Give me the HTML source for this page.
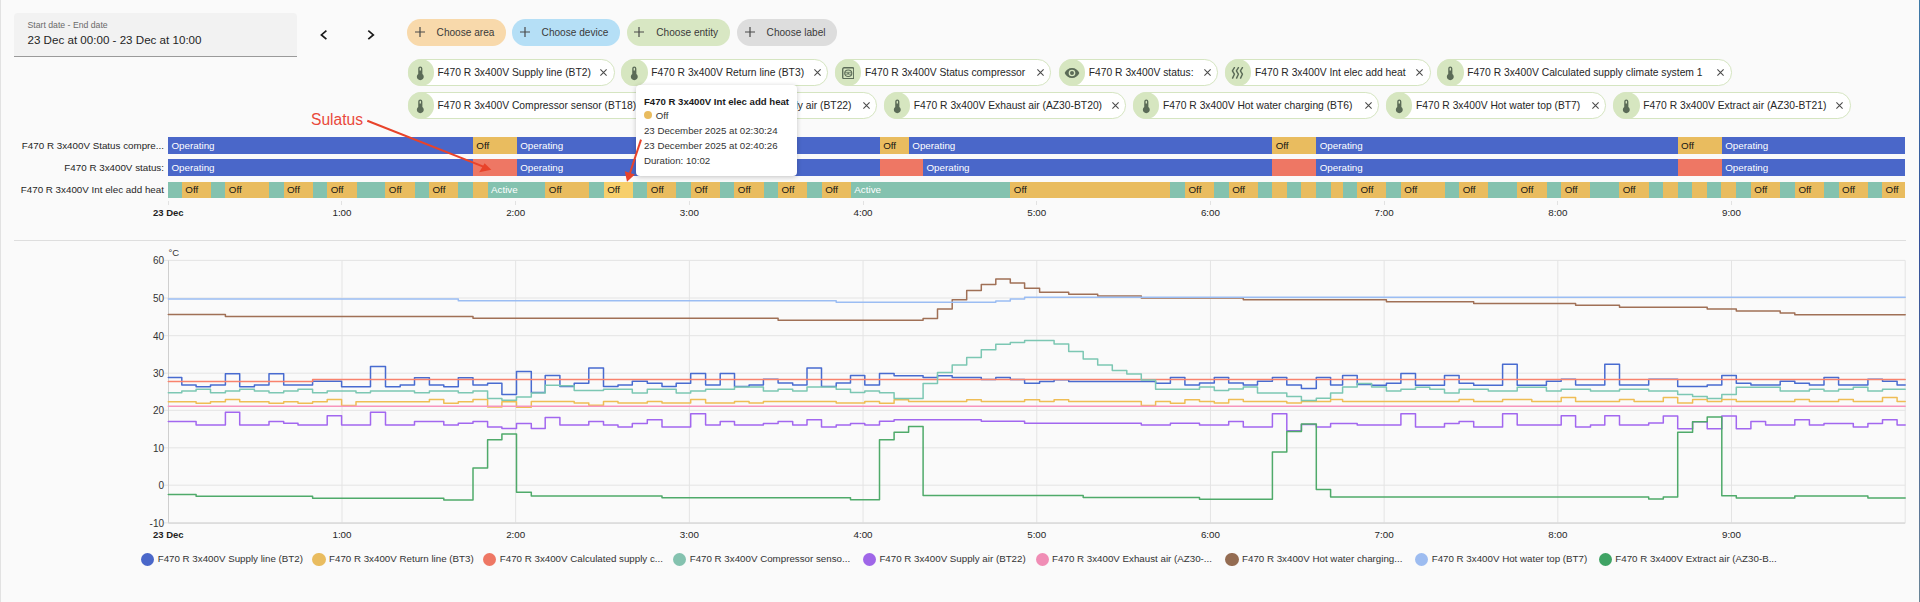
<!DOCTYPE html>
<html><head><meta charset="utf-8">
<style>
html,body{margin:0;padding:0}
body{width:1920px;height:602px;overflow:hidden;background:#fafafa;position:relative;font-family:"Liberation Sans",sans-serif;color:#212121}
.abs{position:absolute}
.lb{position:absolute;left:0;top:0;width:1px;height:602px;background:#e2e2e2}
.rb{position:absolute;left:1919px;top:0;width:1px;height:602px;background:linear-gradient(#3f7aa6,#34509a 40%,#6a8496)}
.date{position:absolute;left:14px;top:13px;width:283px;height:43.5px;background:#f2f2f2;border-radius:4px 4px 0 0;border-bottom:1px solid #9a9a9a;box-sizing:border-box}
.date .l{position:absolute;left:13.5px;top:6.8px;font-size:8.7px;color:#6a6a6a;white-space:nowrap}
.date .v{position:absolute;left:13.5px;top:19.5px;font-size:11.6px;color:#1f1f1f;white-space:nowrap}
.tchip{position:absolute;top:19.2px;height:26.5px;border-radius:13.25px}
.tchip .pl{position:absolute;left:7.6px;top:8.3px;width:10px;height:10px}
.tchip .pl svg{display:block}
.tchip .tt{position:absolute;left:29.6px;top:7.5px;font-size:10.1px;color:#3a3a3a;white-space:nowrap}
.chip{position:absolute;height:26.3px;box-sizing:border-box;border:1px solid #d5e5c1;border-radius:13.2px;background:#fff}
.chip .ic{position:absolute;left:-1px;top:-1px;width:26.3px;height:26.3px;border-radius:50%;background:#d6e6c0;display:flex;align-items:center;justify-content:center}
.chip .ic svg{display:block;position:relative;top:0.6px}
.chip .ct{position:absolute;left:29px;top:6.9px;font-size:10.3px;color:#262626;white-space:nowrap}
.chip .cx{position:absolute;right:6.4px;top:8.9px;width:7px;height:7px}
.chip .cx svg{display:block}
.rl{position:absolute;right:1756px;font-size:9.8px;color:#262626;white-space:nowrap;text-align:right}
.seg{position:absolute;overflow:hidden;white-space:nowrap;font-size:9.8px;box-sizing:border-box;padding-left:3.5px;line-height:16.6px}
.seg span{position:relative;top:0.6px}
.tick{position:absolute;width:1px;background:#e2e2e2}
.xl{position:absolute;width:80px;text-align:center;font-size:9.8px;color:#262626;white-space:nowrap}
.xl.b{font-weight:bold;color:#222;font-size:9.5px}
.sep{position:absolute;left:14px;top:239.5px;width:1892px;height:1.3px;background:#dedede}
.ch{position:absolute;left:0;top:0}
.yl{position:absolute;right:1756px;font-size:10px;color:#333;text-align:right;margin-top:1px}
.unit{position:absolute;left:168.5px;top:247px;font-size:9.5px;color:#333}
.ld{position:absolute;top:553px;width:13.2px;height:13.2px;border-radius:50%}
.lt{position:absolute;top:553.2px;font-size:9.75px;color:#333;white-space:nowrap}
.tip{position:absolute;left:635.7px;top:84.9px;width:161.3px;height:91.6px;background:#fff;border-radius:4px;box-shadow:0 1px 5px rgba(0,0,0,0.22)}
.tip div{position:absolute;left:8.3px;white-space:nowrap;font-size:9.7px;color:#333}
.sul{position:absolute;left:311px;top:111.3px;font-size:15.6px;color:#e9483b;white-space:nowrap}
</style></head><body>
<div class="lb"></div><div class="rb"></div>
<div class="date"><div class="l">Start date - End date</div><div class="v">23 Dec at 00:00 - 23 Dec at 10:00</div></div>
<svg class="abs" style="left:318px;top:28px" width="60" height="14" viewBox="0 0 60 14"><path d="M8.4 2.7L3.4 6.9 8.4 11.2" fill="none" stroke="#1a1a1a" stroke-width="1.7"/><path d="M50.3 2.7L55.3 6.9 50.3 11.2" fill="none" stroke="#1a1a1a" stroke-width="1.7"/></svg>
<div class="tchip" style="left:407px;width:99.00px;background:#f8d9ab"><div class="pl"><svg width="10" height="10" viewBox="0 0 10 10"><path d="M5 0v10M0 5h10" stroke="#4a4a4a" stroke-width="1.2"/></svg></div><div class="tt">Choose area</div></div>
<div class="tchip" style="left:512px;width:108.00px;background:#b5dff6"><div class="pl"><svg width="10" height="10" viewBox="0 0 10 10"><path d="M5 0v10M0 5h10" stroke="#4a4a4a" stroke-width="1.2"/></svg></div><div class="tt">Choose device</div></div>
<div class="tchip" style="left:626.7px;width:103.30px;background:#d8e7c3"><div class="pl"><svg width="10" height="10" viewBox="0 0 10 10"><path d="M5 0v10M0 5h10" stroke="#4a4a4a" stroke-width="1.2"/></svg></div><div class="tt">Choose entity</div></div>
<div class="tchip" style="left:737px;width:100.00px;background:#dddddd"><div class="pl"><svg width="10" height="10" viewBox="0 0 10 10"><path d="M5 0v10M0 5h10" stroke="#4a4a4a" stroke-width="1.2"/></svg></div><div class="tt">Choose label</div></div>
<div class="chip" style="left:407.50px;top:59.3px;width:207.00px"><div class="ic"><svg width="16.6" height="16.6" viewBox="0 0 24 24"><path d="M15 13V5A3 3 0 0 0 9 5V13A5 5 0 1 0 15 13M12 4A1 1 0 0 1 13 5V8H11V5A1 1 0 0 1 12 4Z" fill="#5b6b57"/></svg></div><div class="ct">F470 R 3x400V Supply line (BT2)</div><div class="cx"><svg width="7" height="7" viewBox="0 0 7 7"><path d="M0.4 0.4L6.6 6.6M6.6 0.4L0.4 6.6" stroke="#4a4a4a" stroke-width="1.05"/></svg></div></div>
<div class="chip" style="left:621.25px;top:59.3px;width:206.75px"><div class="ic"><svg width="16.6" height="16.6" viewBox="0 0 24 24"><path d="M15 13V5A3 3 0 0 0 9 5V13A5 5 0 1 0 15 13M12 4A1 1 0 0 1 13 5V8H11V5A1 1 0 0 1 12 4Z" fill="#5b6b57"/></svg></div><div class="ct">F470 R 3x400V Return line (BT3)</div><div class="cx"><svg width="7" height="7" viewBox="0 0 7 7"><path d="M0.4 0.4L6.6 6.6M6.6 0.4L0.4 6.6" stroke="#4a4a4a" stroke-width="1.05"/></svg></div></div>
<div class="chip" style="left:835.00px;top:59.3px;width:216.25px"><div class="ic"><svg width="12.5" height="12.5" viewBox="0 0 12 12"><rect x="0.7" y="0.7" width="10.6" height="10.6" rx="1.3" fill="none" stroke="#5b6b57" stroke-width="1.3"/><ellipse cx="6" cy="6" rx="3.4" ry="3.1" fill="none" stroke="#5b6b57" stroke-width="1.1"/><path d="M2.9 5.1h6.2M2.9 6.9h6.2" stroke="#5b6b57" stroke-width="0.7"/><ellipse cx="6" cy="6" rx="1" ry="0.7" fill="#5b6b57"/></svg></div><div class="ct">F470 R 3x400V Status compressor</div><div class="cx"><svg width="7" height="7" viewBox="0 0 7 7"><path d="M0.4 0.4L6.6 6.6M6.6 0.4L0.4 6.6" stroke="#4a4a4a" stroke-width="1.05"/></svg></div></div>
<div class="chip" style="left:1058.75px;top:59.3px;width:159.25px"><div class="ic"><svg width="16" height="16" viewBox="0 0 24 24"><path d="M12,9A3,3 0 0,0 9,12A3,3 0 0,0 12,15A3,3 0 0,0 15,12A3,3 0 0,0 12,9M12,17A5,5 0 0,1 7,12A5,5 0 0,1 12,7A5,5 0 0,1 17,12A5,5 0 0,1 12,17M12,4.5C7,4.5 2.73,7.61 1,12C2.73,16.39 7,19.5 12,19.5C17,19.5 21.27,16.39 23,12C21.27,7.61 17,4.5 12,4.5Z" fill="#5b6b57"/></svg></div><div class="ct">F470 R 3x400V status:</div><div class="cx"><svg width="7" height="7" viewBox="0 0 7 7"><path d="M0.4 0.4L6.6 6.6M6.6 0.4L0.4 6.6" stroke="#4a4a4a" stroke-width="1.05"/></svg></div></div>
<div class="chip" style="left:1225.00px;top:59.3px;width:205.70px"><div class="ic"><svg width="14" height="12" viewBox="0 0 14 12"><path d="M3.4 0.7L1.4 3.8 3.4 7.2 1.6 11.1M7.4 0.7L5.4 3.8 7.4 7.2 5.6 11.1M11.4 0.7L9.4 3.8 11.4 7.2 9.6 11.1" fill="none" stroke="#5b6b57" stroke-width="1.45" stroke-linecap="round" stroke-linejoin="round"/></svg></div><div class="ct">F470 R 3x400V Int elec add heat</div><div class="cx"><svg width="7" height="7" viewBox="0 0 7 7"><path d="M0.4 0.4L6.6 6.6M6.6 0.4L0.4 6.6" stroke="#4a4a4a" stroke-width="1.05"/></svg></div></div>
<div class="chip" style="left:1437.30px;top:59.3px;width:294.40px"><div class="ic"><svg width="16.6" height="16.6" viewBox="0 0 24 24"><path d="M15 13V5A3 3 0 0 0 9 5V13A5 5 0 1 0 15 13M12 4A1 1 0 0 1 13 5V8H11V5A1 1 0 0 1 12 4Z" fill="#5b6b57"/></svg></div><div class="ct">F470 R 3x400V Calculated supply climate system 1</div><div class="cx"><svg width="7" height="7" viewBox="0 0 7 7"><path d="M0.4 0.4L6.6 6.6M6.6 0.4L0.4 6.6" stroke="#4a4a4a" stroke-width="1.05"/></svg></div></div>
<div class="chip" style="left:407.50px;top:92.4px;width:252.50px"><div class="ic"><svg width="16.6" height="16.6" viewBox="0 0 24 24"><path d="M15 13V5A3 3 0 0 0 9 5V13A5 5 0 1 0 15 13M12 4A1 1 0 0 1 13 5V8H11V5A1 1 0 0 1 12 4Z" fill="#5b6b57"/></svg></div><div class="ct">F470 R 3x400V Compressor sensor (BT18)</div><div class="cx"><svg width="7" height="7" viewBox="0 0 7 7"><path d="M0.4 0.4L6.6 6.6M6.6 0.4L0.4 6.6" stroke="#4a4a4a" stroke-width="1.05"/></svg></div></div>
<div class="chip" style="left:667.00px;top:92.4px;width:210.00px"><div class="ic"><svg width="16.6" height="16.6" viewBox="0 0 24 24"><path d="M15 13V5A3 3 0 0 0 9 5V13A5 5 0 1 0 15 13M12 4A1 1 0 0 1 13 5V8H11V5A1 1 0 0 1 12 4Z" fill="#5b6b57"/></svg></div><div class="ct">F470 R 3x400V Supply air (BT22)</div><div class="cx"><svg width="7" height="7" viewBox="0 0 7 7"><path d="M0.4 0.4L6.6 6.6M6.6 0.4L0.4 6.6" stroke="#4a4a4a" stroke-width="1.05"/></svg></div></div>
<div class="chip" style="left:883.75px;top:92.4px;width:242.50px"><div class="ic"><svg width="16.6" height="16.6" viewBox="0 0 24 24"><path d="M15 13V5A3 3 0 0 0 9 5V13A5 5 0 1 0 15 13M12 4A1 1 0 0 1 13 5V8H11V5A1 1 0 0 1 12 4Z" fill="#5b6b57"/></svg></div><div class="ct">F470 R 3x400V Exhaust air (AZ30-BT20)</div><div class="cx"><svg width="7" height="7" viewBox="0 0 7 7"><path d="M0.4 0.4L6.6 6.6M6.6 0.4L0.4 6.6" stroke="#4a4a4a" stroke-width="1.05"/></svg></div></div>
<div class="chip" style="left:1133.00px;top:92.4px;width:246.30px"><div class="ic"><svg width="16.6" height="16.6" viewBox="0 0 24 24"><path d="M15 13V5A3 3 0 0 0 9 5V13A5 5 0 1 0 15 13M12 4A1 1 0 0 1 13 5V8H11V5A1 1 0 0 1 12 4Z" fill="#5b6b57"/></svg></div><div class="ct">F470 R 3x400V Hot water charging (BT6)</div><div class="cx"><svg width="7" height="7" viewBox="0 0 7 7"><path d="M0.4 0.4L6.6 6.6M6.6 0.4L0.4 6.6" stroke="#4a4a4a" stroke-width="1.05"/></svg></div></div>
<div class="chip" style="left:1386.00px;top:92.4px;width:220.00px"><div class="ic"><svg width="16.6" height="16.6" viewBox="0 0 24 24"><path d="M15 13V5A3 3 0 0 0 9 5V13A5 5 0 1 0 15 13M12 4A1 1 0 0 1 13 5V8H11V5A1 1 0 0 1 12 4Z" fill="#5b6b57"/></svg></div><div class="ct">F470 R 3x400V Hot water top (BT7)</div><div class="cx"><svg width="7" height="7" viewBox="0 0 7 7"><path d="M0.4 0.4L6.6 6.6M6.6 0.4L0.4 6.6" stroke="#4a4a4a" stroke-width="1.05"/></svg></div></div>
<div class="chip" style="left:1613.30px;top:92.4px;width:237.40px"><div class="ic"><svg width="16.6" height="16.6" viewBox="0 0 24 24"><path d="M15 13V5A3 3 0 0 0 9 5V13A5 5 0 1 0 15 13M12 4A1 1 0 0 1 13 5V8H11V5A1 1 0 0 1 12 4Z" fill="#5b6b57"/></svg></div><div class="ct">F470 R 3x400V Extract air (AZ30-BT21)</div><div class="cx"><svg width="7" height="7" viewBox="0 0 7 7"><path d="M0.4 0.4L6.6 6.6M6.6 0.4L0.4 6.6" stroke="#4a4a4a" stroke-width="1.05"/></svg></div></div>
<div class="rl" style="top:139.5px">F470 R 3x400V Status compre...</div>
<div class="rl" style="top:162px">F470 R 3x400V status:</div>
<div class="rl" style="top:184.2px">F470 R 3x400V Int elec add heat</div>
<div class="seg" style="left:168.00px;top:137.1px;width:305.50px;height:16.6px;background:#4a67c9"><span style="color:#fff">Operating</span></div>
<div class="seg" style="left:472.80px;top:137.1px;width:44.60px;height:16.6px;background:#e9bc5f"><span style="color:#141414">Off</span></div>
<div class="seg" style="left:516.70px;top:137.1px;width:363.70px;height:16.6px;background:#4a67c9"><span style="color:#fff">Operating</span></div>
<div class="seg" style="left:879.70px;top:137.1px;width:29.80px;height:16.6px;background:#e9bc5f"><span style="color:#141414">Off</span></div>
<div class="seg" style="left:908.80px;top:137.1px;width:364.10px;height:16.6px;background:#4a67c9"><span style="color:#fff">Operating</span></div>
<div class="seg" style="left:1272.20px;top:137.1px;width:44.70px;height:16.6px;background:#e9bc5f"><span style="color:#141414">Off</span></div>
<div class="seg" style="left:1316.20px;top:137.1px;width:362.10px;height:16.6px;background:#4a67c9"><span style="color:#fff">Operating</span></div>
<div class="seg" style="left:1677.60px;top:137.1px;width:44.80px;height:16.6px;background:#e9bc5f"><span style="color:#141414">Off</span></div>
<div class="seg" style="left:1721.70px;top:137.1px;width:183.50px;height:16.6px;background:#4a67c9"><span style="color:#fff">Operating</span></div>
<div class="seg" style="left:168.00px;top:159.2px;width:305.50px;height:16.6px;background:#4a67c9"><span style="color:#fff">Operating</span></div>
<div class="seg" style="left:472.80px;top:159.2px;width:44.60px;height:16.6px;background:#ee7764"></div>
<div class="seg" style="left:516.70px;top:159.2px;width:363.70px;height:16.6px;background:#4a67c9"><span style="color:#fff">Operating</span></div>
<div class="seg" style="left:879.70px;top:159.2px;width:44.00px;height:16.6px;background:#ee7764"></div>
<div class="seg" style="left:923.00px;top:159.2px;width:349.90px;height:16.6px;background:#4a67c9"><span style="color:#fff">Operating</span></div>
<div class="seg" style="left:1272.20px;top:159.2px;width:44.70px;height:16.6px;background:#ee7764"></div>
<div class="seg" style="left:1316.20px;top:159.2px;width:362.10px;height:16.6px;background:#4a67c9"><span style="color:#fff">Operating</span></div>
<div class="seg" style="left:1677.60px;top:159.2px;width:44.80px;height:16.6px;background:#ee7764"></div>
<div class="seg" style="left:1721.70px;top:159.2px;width:183.50px;height:16.6px;background:#4a67c9"><span style="color:#fff">Operating</span></div>
<div class="seg" style="left:168.00px;top:181.7px;width:14.50px;height:16.2px;background:#84c2af"></div>
<div class="seg" style="left:181.80px;top:181.7px;width:29.70px;height:16.2px;background:#e9bc5f"><span style="color:#141414">Off</span></div>
<div class="seg" style="left:210.80px;top:181.7px;width:15.20px;height:16.2px;background:#84c2af"></div>
<div class="seg" style="left:225.30px;top:181.7px;width:44.60px;height:16.2px;background:#e9bc5f"><span style="color:#141414">Off</span></div>
<div class="seg" style="left:269.20px;top:181.7px;width:15.00px;height:16.2px;background:#84c2af"></div>
<div class="seg" style="left:283.50px;top:181.7px;width:30.00px;height:16.2px;background:#e9bc5f"><span style="color:#141414">Off</span></div>
<div class="seg" style="left:312.80px;top:181.7px;width:15.10px;height:16.2px;background:#84c2af"></div>
<div class="seg" style="left:327.20px;top:181.7px;width:30.20px;height:16.2px;background:#e9bc5f"><span style="color:#141414">Off</span></div>
<div class="seg" style="left:356.70px;top:181.7px;width:29.30px;height:16.2px;background:#84c2af"></div>
<div class="seg" style="left:385.30px;top:181.7px;width:30.10px;height:16.2px;background:#e9bc5f"><span style="color:#141414">Off</span></div>
<div class="seg" style="left:414.70px;top:181.7px;width:15.00px;height:16.2px;background:#84c2af"></div>
<div class="seg" style="left:429.00px;top:181.7px;width:30.00px;height:16.2px;background:#e9bc5f"><span style="color:#141414">Off</span></div>
<div class="seg" style="left:458.30px;top:181.7px;width:15.20px;height:16.2px;background:#84c2af"></div>
<div class="seg" style="left:472.80px;top:181.7px;width:15.40px;height:16.2px;background:#e9bc5f"></div>
<div class="seg" style="left:487.50px;top:181.7px;width:58.50px;height:16.2px;background:#84c2af"><span style="color:#fff">Active</span></div>
<div class="seg" style="left:545.30px;top:181.7px;width:44.60px;height:16.2px;background:#e9bc5f"><span style="color:#141414">Off</span></div>
<div class="seg" style="left:589.20px;top:181.7px;width:15.20px;height:16.2px;background:#84c2af"></div>
<div class="seg" style="left:603.70px;top:181.7px;width:30.00px;height:16.2px;background:#f7cf6c"><span style="color:#141414">Off</span></div>
<div class="seg" style="left:633.00px;top:181.7px;width:15.00px;height:16.2px;background:#84c2af"></div>
<div class="seg" style="left:647.30px;top:181.7px;width:29.70px;height:16.2px;background:#e9bc5f"><span style="color:#141414">Off</span></div>
<div class="seg" style="left:676.30px;top:181.7px;width:15.40px;height:16.2px;background:#84c2af"></div>
<div class="seg" style="left:691.00px;top:181.7px;width:29.70px;height:16.2px;background:#e9bc5f"><span style="color:#141414">Off</span></div>
<div class="seg" style="left:720.00px;top:181.7px;width:15.00px;height:16.2px;background:#84c2af"></div>
<div class="seg" style="left:734.30px;top:181.7px;width:30.10px;height:16.2px;background:#e9bc5f"><span style="color:#141414">Off</span></div>
<div class="seg" style="left:763.70px;top:181.7px;width:15.00px;height:16.2px;background:#84c2af"></div>
<div class="seg" style="left:778.00px;top:181.7px;width:29.90px;height:16.2px;background:#e9bc5f"><span style="color:#141414">Off</span></div>
<div class="seg" style="left:807.20px;top:181.7px;width:15.20px;height:16.2px;background:#84c2af"></div>
<div class="seg" style="left:821.70px;top:181.7px;width:29.80px;height:16.2px;background:#e9bc5f"><span style="color:#141414">Off</span></div>
<div class="seg" style="left:850.80px;top:181.7px;width:160.20px;height:16.2px;background:#84c2af"><span style="color:#fff">Active</span></div>
<div class="seg" style="left:1010.30px;top:181.7px;width:160.70px;height:16.2px;background:#e9bc5f"><span style="color:#141414">Off</span></div>
<div class="seg" style="left:1170.30px;top:181.7px;width:15.40px;height:16.2px;background:#84c2af"></div>
<div class="seg" style="left:1185.00px;top:181.7px;width:29.90px;height:16.2px;background:#e9bc5f"><span style="color:#141414">Off</span></div>
<div class="seg" style="left:1214.20px;top:181.7px;width:15.20px;height:16.2px;background:#84c2af"></div>
<div class="seg" style="left:1228.70px;top:181.7px;width:30.00px;height:16.2px;background:#e9bc5f"><span style="color:#141414">Off</span></div>
<div class="seg" style="left:1258.00px;top:181.7px;width:14.90px;height:16.2px;background:#84c2af"></div>
<div class="seg" style="left:1272.20px;top:181.7px;width:15.50px;height:16.2px;background:#e9bc5f"></div>
<div class="seg" style="left:1287.00px;top:181.7px;width:15.00px;height:16.2px;background:#84c2af"></div>
<div class="seg" style="left:1301.30px;top:181.7px;width:15.60px;height:16.2px;background:#e9bc5f"></div>
<div class="seg" style="left:1316.20px;top:181.7px;width:15.20px;height:16.2px;background:#84c2af"></div>
<div class="seg" style="left:1330.70px;top:181.7px;width:12.80px;height:16.2px;background:#e9bc5f"></div>
<div class="seg" style="left:1342.80px;top:181.7px;width:14.90px;height:16.2px;background:#84c2af"></div>
<div class="seg" style="left:1357.00px;top:181.7px;width:30.00px;height:16.2px;background:#e9bc5f"><span style="color:#141414">Off</span></div>
<div class="seg" style="left:1386.30px;top:181.7px;width:15.20px;height:16.2px;background:#84c2af"></div>
<div class="seg" style="left:1400.80px;top:181.7px;width:44.60px;height:16.2px;background:#e9bc5f"><span style="color:#141414">Off</span></div>
<div class="seg" style="left:1444.70px;top:181.7px;width:15.20px;height:16.2px;background:#84c2af"></div>
<div class="seg" style="left:1459.20px;top:181.7px;width:29.50px;height:16.2px;background:#e9bc5f"><span style="color:#141414">Off</span></div>
<div class="seg" style="left:1488.00px;top:181.7px;width:29.70px;height:16.2px;background:#84c2af"></div>
<div class="seg" style="left:1517.00px;top:181.7px;width:30.40px;height:16.2px;background:#e9bc5f"><span style="color:#141414">Off</span></div>
<div class="seg" style="left:1546.70px;top:181.7px;width:15.20px;height:16.2px;background:#84c2af"></div>
<div class="seg" style="left:1561.20px;top:181.7px;width:29.80px;height:16.2px;background:#e9bc5f"><span style="color:#141414">Off</span></div>
<div class="seg" style="left:1590.30px;top:181.7px;width:29.60px;height:16.2px;background:#84c2af"></div>
<div class="seg" style="left:1619.20px;top:181.7px;width:30.20px;height:16.2px;background:#e9bc5f"><span style="color:#141414">Off</span></div>
<div class="seg" style="left:1648.70px;top:181.7px;width:15.00px;height:16.2px;background:#84c2af"></div>
<div class="seg" style="left:1663.00px;top:181.7px;width:15.60px;height:16.2px;background:#e9bc5f"></div>
<div class="seg" style="left:1677.90px;top:181.7px;width:15.00px;height:16.2px;background:#84c2af"></div>
<div class="seg" style="left:1692.20px;top:181.7px;width:15.60px;height:16.2px;background:#e9bc5f"></div>
<div class="seg" style="left:1707.10px;top:181.7px;width:15.00px;height:16.2px;background:#84c2af"></div>
<div class="seg" style="left:1721.40px;top:181.7px;width:15.60px;height:16.2px;background:#e9bc5f"></div>
<div class="seg" style="left:1736.30px;top:181.7px;width:15.20px;height:16.2px;background:#84c2af"></div>
<div class="seg" style="left:1750.80px;top:181.7px;width:30.20px;height:16.2px;background:#e9bc5f"><span style="color:#141414">Off</span></div>
<div class="seg" style="left:1780.30px;top:181.7px;width:15.30px;height:16.2px;background:#84c2af"></div>
<div class="seg" style="left:1794.90px;top:181.7px;width:29.80px;height:16.2px;background:#e9bc5f"><span style="color:#141414">Off</span></div>
<div class="seg" style="left:1824.00px;top:181.7px;width:15.30px;height:16.2px;background:#84c2af"></div>
<div class="seg" style="left:1838.60px;top:181.7px;width:29.90px;height:16.2px;background:#e9bc5f"><span style="color:#141414">Off</span></div>
<div class="seg" style="left:1867.80px;top:181.7px;width:15.00px;height:16.2px;background:#84c2af"></div>
<div class="seg" style="left:1882.10px;top:181.7px;width:23.10px;height:16.2px;background:#e9bc5f"><span style="color:#141414">Off</span></div>
<div class="tick" style="left:167.80px;top:201px;height:3.5px"></div>
<div class="xl b" style="left:128.30px;top:207px">23 Dec</div>
<div class="tick" style="left:341.49px;top:201px;height:3.5px"></div>
<div class="xl" style="left:301.99px;top:207px">1:00</div>
<div class="tick" style="left:515.18px;top:201px;height:3.5px"></div>
<div class="xl" style="left:475.68px;top:207px">2:00</div>
<div class="tick" style="left:688.87px;top:201px;height:3.5px"></div>
<div class="xl" style="left:649.37px;top:207px">3:00</div>
<div class="tick" style="left:862.56px;top:201px;height:3.5px"></div>
<div class="xl" style="left:823.06px;top:207px">4:00</div>
<div class="tick" style="left:1036.25px;top:201px;height:3.5px"></div>
<div class="xl" style="left:996.75px;top:207px">5:00</div>
<div class="tick" style="left:1209.94px;top:201px;height:3.5px"></div>
<div class="xl" style="left:1170.44px;top:207px">6:00</div>
<div class="tick" style="left:1383.63px;top:201px;height:3.5px"></div>
<div class="xl" style="left:1344.13px;top:207px">7:00</div>
<div class="tick" style="left:1557.32px;top:201px;height:3.5px"></div>
<div class="xl" style="left:1517.82px;top:207px">8:00</div>
<div class="tick" style="left:1731.01px;top:201px;height:3.5px"></div>
<div class="xl" style="left:1691.51px;top:207px">9:00</div>
<div class="sep"></div>
<svg class="ch" width="1920" height="602" viewBox="0 0 1920 602">
<line x1="164" y1="522.90" x2="1905.2" y2="522.90" stroke="#e4e4e4" stroke-width="1"/>
<line x1="164" y1="485.20" x2="1905.2" y2="485.20" stroke="#e4e4e4" stroke-width="1"/>
<line x1="164" y1="447.80" x2="1905.2" y2="447.80" stroke="#e4e4e4" stroke-width="1"/>
<line x1="164" y1="410.30" x2="1905.2" y2="410.30" stroke="#e4e4e4" stroke-width="1"/>
<line x1="164" y1="373.20" x2="1905.2" y2="373.20" stroke="#e4e4e4" stroke-width="1"/>
<line x1="164" y1="335.70" x2="1905.2" y2="335.70" stroke="#e4e4e4" stroke-width="1"/>
<line x1="164" y1="298.00" x2="1905.2" y2="298.00" stroke="#e4e4e4" stroke-width="1"/>
<line x1="164" y1="260.40" x2="1905.2" y2="260.40" stroke="#e4e4e4" stroke-width="1"/>
<line x1="341.99" y1="260.4" x2="341.99" y2="522.9" stroke="#e4e4e4" stroke-width="1"/>
<line x1="515.68" y1="260.4" x2="515.68" y2="522.9" stroke="#e4e4e4" stroke-width="1"/>
<line x1="689.37" y1="260.4" x2="689.37" y2="522.9" stroke="#e4e4e4" stroke-width="1"/>
<line x1="863.06" y1="260.4" x2="863.06" y2="522.9" stroke="#e4e4e4" stroke-width="1"/>
<line x1="1036.75" y1="260.4" x2="1036.75" y2="522.9" stroke="#e4e4e4" stroke-width="1"/>
<line x1="1210.44" y1="260.4" x2="1210.44" y2="522.9" stroke="#e4e4e4" stroke-width="1"/>
<line x1="1384.13" y1="260.4" x2="1384.13" y2="522.9" stroke="#e4e4e4" stroke-width="1"/>
<line x1="1557.82" y1="260.4" x2="1557.82" y2="522.9" stroke="#e4e4e4" stroke-width="1"/>
<line x1="1731.51" y1="260.4" x2="1731.51" y2="522.9" stroke="#e4e4e4" stroke-width="1"/>
<line x1="1905.20" y1="260.4" x2="1905.20" y2="522.9" stroke="#e4e4e4" stroke-width="1"/>
<line x1="168.5" y1="260.4" x2="168.5" y2="523" stroke="#cfcfcf" stroke-width="1"/>
<line x1="168.3" y1="523.2" x2="1905.2" y2="523.2" stroke="#d6d6d6" stroke-width="1.2"/>
<path d="M168.30,377.40H181.80V384.90H196.10V386.80H210.50V384.90H225.40V373.70H239.70V386.80H254.40V384.90H269.00V373.70H283.70V384.90H312.60V381.20H341.60V386.80H370.50V366.50H385.50V386.80H400.20V384.90H414.50V377.70H429.40V384.90H443.80V386.80H458.30V377.70H473.00V384.90H487.60V383.30H501.90V394.40H516.50V371.60H531.30V392.60H545.20V375.60H559.90V386.60H574.20V383.20H588.80V368.00H603.50V386.60H618.00V384.90H632.30V381.30H647.30V383.20H662.00V386.60H676.20V383.20H690.70V373.60H705.60V384.90H720.20V373.60H734.50V386.60H749.10V384.90H763.40V379.30H778.10V382.90H792.70V384.90H807.00V368.00H821.50V386.60H836.20V382.90H850.50V375.60H864.80V384.90H879.50V373.60H894.10V375.70H923.10V377.40H937.50V375.70H952.20V377.40H981.30V379.40H995.80V377.40H1010.30V379.40H1024.60V383.20H1039.60V381.50H1054.10V379.70H1068.70V381.50H1155.60V383.20H1170.40V377.40H1184.90V384.90H1199.50V383.00H1214.30V377.60H1228.70V382.90H1243.30V384.90H1257.50V381.20H1272.40V377.60H1286.80V384.90H1301.40V388.50H1316.30V377.60H1330.60V384.90H1342.60V375.60H1357.20V384.50H1371.60V385.30H1386.40V383.20H1400.90V373.60H1415.50V385.30H1444.50V375.60H1459.10V383.20H1473.70V385.30H1502.60V364.30H1517.20V385.30H1546.40V381.30H1561.20V379.30H1575.60V384.90H1604.80V364.30H1619.50V384.90H1648.70V379.30H1677.70V386.60H1707.20V384.90H1721.80V375.60H1736.30V383.20H1750.90V384.90H1780.20V381.20H1794.80V383.20H1809.40V384.90H1824.00V377.60H1838.60V384.90H1867.90V379.30H1882.50V381.20H1897.10V384.90H1905.20" fill="none" stroke="#486bd0" stroke-width="1.5" stroke-linejoin="round" stroke-linecap="round"/>
<path d="M168.30,401.70H196.10V403.30H210.50V401.70H225.40V399.50H239.70V401.70H269.00V403.30H283.70V401.70H298.00V403.30H312.60V401.70H327.20V399.50H341.60V405.40H356.00V401.70H429.40V399.50H443.80V403.30H458.30V401.70H473.00V399.50H487.60V407.10H501.90V401.70H516.50V407.20H531.30V401.50H574.20V403.10H588.80V405.30H603.50V401.50H618.00V403.10H647.30V401.50H662.00V403.10H690.70V399.50H705.60V403.10H734.50V401.50H749.10V403.10H763.40V401.50H836.20V403.10H864.80V401.50H879.50V403.30H894.10V399.80H908.60V401.50H966.70V399.80H981.30V401.50H1024.60V399.80H1039.60V401.50H1054.10V399.80H1068.70V401.50H1141.30V405.40H1155.60V401.50H1170.40V403.30H1184.90V399.80H1199.50V401.50H1214.30V403.10H1228.70V399.50H1243.30V401.50H1286.80V403.10H1301.40V401.50H1330.60V399.50H1342.60V401.50H1459.10V399.50H1473.70V401.50H1502.60V399.50H1531.80V401.50H1561.20V397.50H1575.60V401.50H1619.50V399.50H1634.10V401.50H1663.30V397.50H1677.70V403.10H1692.60V399.50H1707.20V401.50H1721.80V399.50H1736.30V401.50H1794.80V399.50H1809.40V401.50H1838.60V399.50H1853.30V401.50H1882.50V397.50H1897.10V401.50H1905.20" fill="none" stroke="#efbd55" stroke-width="1.5" stroke-linejoin="round" stroke-linecap="round"/>
<path d="M168.30,381.40H312.60V379.60H1905.20" fill="none" stroke="#f8826d" stroke-width="1.5" stroke-linejoin="round" stroke-linecap="round"/>
<path d="M168.30,392.70H181.80V391.10H196.10V389.30H210.50V392.70H225.40V391.10H239.70V389.30H254.40V391.10H269.00V392.70H283.70V391.10H298.00V389.30H312.60V392.70H327.20V391.10H356.00V392.70H370.50V391.10H414.50V392.70H429.40V391.10H458.30V392.70H473.00V391.10H487.60V398.60H501.90V400.20H516.50V396.90H531.30V392.90H545.20V385.30H559.90V385.80H574.20V390.60H603.50V389.30H632.30V392.90H647.30V389.30H676.20V392.90H690.70V390.90H705.60V389.30H734.50V386.90H763.40V390.90H778.10V389.30H792.70V390.90H807.00V386.90H836.20V389.30H850.50V392.60H864.80V391.00H879.50V392.80H894.10V398.40H923.10V383.50H937.50V372.40H952.20V364.90H966.70V357.40H981.30V349.70H995.80V344.30H1010.30V342.60H1024.60V340.50H1054.10V344.00H1068.70V351.50H1083.20V359.10H1097.70V364.90H1112.30V370.60H1126.80V374.00H1141.30V380.00H1155.60V389.30H1199.50V387.00H1214.30V390.60H1228.70V388.90H1243.30V386.90H1257.50V392.90H1286.80V396.50H1301.40V400.50H1316.30V398.20H1330.60V392.90H1342.60V386.90H1357.20V383.60H1371.60V387.00H1386.40V390.90H1400.90V389.30H1415.50V387.20H1429.80V389.30H1444.50V392.90H1459.10V389.30H1488.30V390.90H1517.20V387.20H1546.40V390.90H1561.20V389.30H1590.50V390.90H1619.50V389.30H1648.70V390.90H1677.70V394.50H1692.60V396.50H1707.20V398.50H1721.80V394.50H1736.30V387.20H1780.20V390.90H1809.40V389.30H1824.00V390.90H1838.60V389.30H1853.30V387.20H1867.90V390.90H1882.50V389.30H1905.20" fill="none" stroke="#7cc7b3" stroke-width="1.5" stroke-linejoin="round" stroke-linecap="round"/>
<path d="M168.30,421.40H196.10V425.10H225.40V412.30H239.70V425.10H269.00V421.40H283.70V423.30H298.00V425.10H327.20V415.70H341.60V425.10H370.50V412.30H385.50V425.10H414.50V421.40H443.80V425.10H458.30V423.30H473.00V421.40H487.60V427.00H501.90V428.50H516.50V423.50H531.30V428.40H545.20V417.50H559.90V425.10H588.80V421.50H603.50V425.10H618.00V427.00H632.30V423.50H647.30V419.70H662.00V427.00H690.70V413.80H705.60V425.10H720.20V421.50H734.50V425.10H763.40V423.50H778.10V421.50H792.70V425.10H807.00V419.70H821.50V427.00H836.20V425.10H850.50V423.50H864.80V425.10H879.50V421.20H894.10V419.80H981.30V421.20H1024.60V423.30H1141.30V425.10H1170.40V423.30H1199.50V425.10H1228.70V421.50H1243.30V427.00H1272.40V413.80H1286.80V430.80H1301.40V424.40H1316.30V427.00H1330.60V423.50H1357.20V425.10H1400.90V413.80H1415.50V427.00H1444.50V423.50H1459.10V421.50H1473.70V427.00H1502.60V413.80H1517.20V425.10H1561.20V415.80H1575.60V427.00H1590.50V425.10H1604.80V415.80H1619.50V425.10H1648.70V423.00H1663.30V415.90H1677.70V428.80H1692.60V421.80H1707.20V428.80H1721.80V415.90H1736.30V428.80H1750.90V421.60H1765.60V425.10H1794.80V419.70H1809.40V425.10H1824.00V423.50H1853.30V427.00H1867.90V423.50H1882.50V419.70H1897.10V425.10H1905.20" fill="none" stroke="#a267ef" stroke-width="1.5" stroke-linejoin="round" stroke-linecap="round"/>
<path d="M168.30,406.30H1905.20" fill="none" stroke="#f795bd" stroke-width="1.5" stroke-linejoin="round" stroke-linecap="round"/>
<path d="M168.30,314.50H225.40V316.40H473.00V318.20H778.10V320.20H923.10V318.50H937.50V309.10H952.20V299.80H966.70V290.40H981.30V284.50H995.80V279.10H1010.30V282.90H1024.60V288.30H1039.60V292.30H1068.70V294.30H1097.70V296.00H1141.30V297.90H1243.30V299.80H1386.40V301.70H1473.70V303.40H1575.60V305.30H1619.50V307.20H1707.20V309.00H1736.30V310.90H1780.20V312.90H1794.80V314.80H1905.20" fill="none" stroke="#a07056" stroke-width="1.5" stroke-linejoin="round" stroke-linecap="round"/>
<path d="M168.30,299.10H458.30V300.70H836.20V302.30H995.80V301.00H1010.30V298.90H1024.60V297.30H1905.20" fill="none" stroke="#9bbdf3" stroke-width="1.5" stroke-linejoin="round" stroke-linecap="round"/>
<path d="M168.30,494.40H196.10V496.30H312.60V498.20H443.80V500.00H473.00V468.00H487.60V439.80H501.90V434.10H516.50V492.30H531.30V495.90H662.00V497.80H850.50V499.70H879.50V439.80H894.10V432.30H908.60V426.40H923.10V495.60H1083.20V497.40H1199.50V499.20H1272.40V452.00H1286.80V431.40H1301.40V424.10H1316.30V489.60H1330.60V497.10H1648.70V498.90H1663.30V497.00H1677.70V432.30H1692.60V421.80H1707.20V417.10H1721.80V495.80H1736.30V498.00H1794.80V495.90H1867.90V498.00H1905.20" fill="none" stroke="#4faa6a" stroke-width="1.5" stroke-linejoin="round" stroke-linecap="round"/>
</svg>
<div class="yl" style="top:516.90px">-10</div>
<div class="yl" style="top:479.20px">0</div>
<div class="yl" style="top:441.80px">10</div>
<div class="yl" style="top:404.30px">20</div>
<div class="yl" style="top:367.20px">30</div>
<div class="yl" style="top:329.70px">40</div>
<div class="yl" style="top:292.00px">50</div>
<div class="yl" style="top:254.40px">60</div>
<div class="unit">°C</div>
<div class="xl b" style="left:128.30px;top:528.5px">23 Dec</div>
<div class="xl" style="left:301.99px;top:528.5px">1:00</div>
<div class="xl" style="left:475.68px;top:528.5px">2:00</div>
<div class="xl" style="left:649.37px;top:528.5px">3:00</div>
<div class="xl" style="left:823.06px;top:528.5px">4:00</div>
<div class="xl" style="left:996.75px;top:528.5px">5:00</div>
<div class="xl" style="left:1170.44px;top:528.5px">6:00</div>
<div class="xl" style="left:1344.13px;top:528.5px">7:00</div>
<div class="xl" style="left:1517.82px;top:528.5px">8:00</div>
<div class="xl" style="left:1691.51px;top:528.5px">9:00</div>
<div class="ld" style="left:141.10px;background:#4a67c9"></div><div class="lt" style="left:157.70px">F470 R 3x400V Supply line (BT2)</div>
<div class="ld" style="left:312.40px;background:#e9bc5f"></div><div class="lt" style="left:329.00px">F470 R 3x400V Return line (BT3)</div>
<div class="ld" style="left:483.20px;background:#ee7764"></div><div class="lt" style="left:499.80px">F470 R 3x400V Calculated supply c...</div>
<div class="ld" style="left:673.10px;background:#84c2af"></div><div class="lt" style="left:689.70px">F470 R 3x400V Compressor senso...</div>
<div class="ld" style="left:862.80px;background:#9f66e8"></div><div class="lt" style="left:879.40px">F470 R 3x400V Supply air (BT22)</div>
<div class="ld" style="left:1035.50px;background:#f08db5"></div><div class="lt" style="left:1052.10px">F470 R 3x400V Exhaust air (AZ30-...</div>
<div class="ld" style="left:1225.40px;background:#946c52"></div><div class="lt" style="left:1242.00px">F470 R 3x400V Hot water charging...</div>
<div class="ld" style="left:1415.10px;background:#9dbcf0"></div><div class="lt" style="left:1431.70px">F470 R 3x400V Hot water top (BT7)</div>
<div class="ld" style="left:1598.70px;background:#3fa364"></div><div class="lt" style="left:1615.30px">F470 R 3x400V Extract air (AZ30-B...</div>
<div class="tip">
<div style="top:10.8px;font-weight:bold;color:#1a1a1a;font-size:9.6px">F470 R 3x400V Int elec add heat</div>
<div style="top:26.2px;left:8.3px;width:8px;height:8px;border-radius:50%;background:#e9bc5f"></div>
<div style="top:25.2px;left:20px">Off</div>
<div style="top:40.4px">23 December 2025 at 02:30:24</div>
<div style="top:55.5px">23 December 2025 at 02:40:26</div>
<div style="top:70.5px">Duration: 10:02</div>
</div>
<div class="sul">Sulatus</div>
<svg class="abs" style="left:0;top:0" width="1920" height="602" viewBox="0 0 1920 602">
<line x1="367.3" y1="120.8" x2="484" y2="166.9" stroke="#e8432a" stroke-width="2"/>
<path d="M491.3 169.8L479.2 172.2 484.6 163.2Z" fill="#e8432a"/>
<line x1="641" y1="139.6" x2="630" y2="173" stroke="#e8432a" stroke-width="2"/>
<path d="M627 181.7L624.8 171.3 634.9 174.6Z" fill="#e8432a"/>
</svg>
</body></html>
